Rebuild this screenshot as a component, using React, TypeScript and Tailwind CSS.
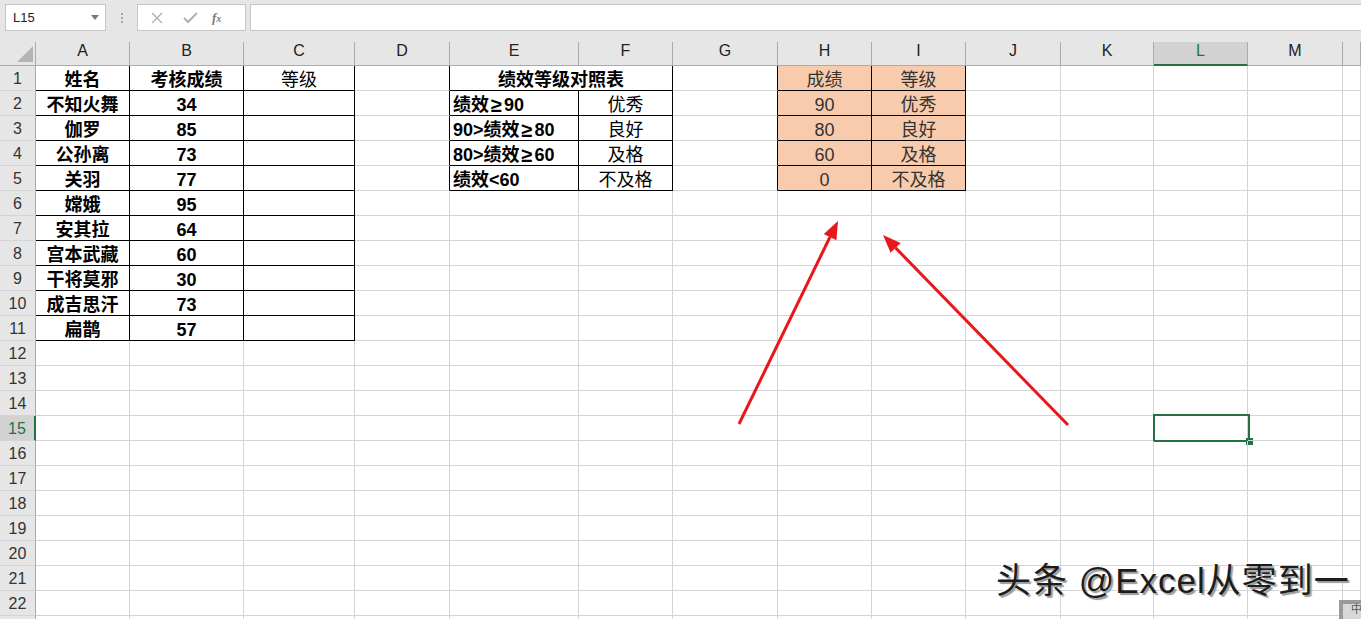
import React from "react";

type Cell = { t: string; b?: boolean; left?: boolean; fill?: boolean; span?: number };

const COL_LETTERS = ["A", "B", "C", "D", "E", "F", "G", "H", "I", "J", "K", "L", "M", ""];

const PEOPLE: [string, string][] = [
  ["不知火舞", "34"],
  ["伽罗", "85"],
  ["公孙离", "73"],
  ["关羽", "77"],
  ["嫦娥", "95"],
  ["安其拉", "64"],
  ["宫本武藏", "60"],
  ["干将莫邪", "30"],
  ["成吉思汗", "73"],
  ["扁鹊", "57"],
];

const RULES: [string, string][] = [
  ["绩效≥90", "优秀"],
  ["90>绩效≥80", "良好"],
  ["80>绩效≥60", "及格"],
  ["绩效<60", "不及格"],
];

const LOOKUP: [string, string][] = [
  ["90", "优秀"],
  ["80", "良好"],
  ["60", "及格"],
  ["0", "不及格"],
];

// bordered blocks: [rowFrom, rowTo, colFrom, colTo]
const RANGES = [
  [1, 11, 1, 3],
  [1, 5, 5, 6],
  [1, 5, 8, 9],
];

const inRange = (r: number, c: number) =>
  RANGES.some(([r1, r2, c1, c2]) => r >= r1 && r <= r2 && c >= c1 && c <= c2);

function buildCells() {
  const m: Record<string, Cell> = {};
  m["1,1"] = { t: "姓名", b: true };
  m["1,2"] = { t: "考核成绩", b: true };
  m["1,3"] = { t: "等级" };
  m["1,5"] = { t: "绩效等级对照表", b: true, span: 2 };
  m["1,8"] = { t: "成绩", fill: true };
  m["1,9"] = { t: "等级", fill: true };
  PEOPLE.forEach(([n, s], i) => {
    m[`${i + 2},1`] = { t: n, b: true };
    m[`${i + 2},2`] = { t: s, b: true };
  });
  RULES.forEach(([a, g], i) => {
    m[`${i + 2},5`] = { t: a, b: true, left: true };
    m[`${i + 2},6`] = { t: g };
  });
  LOOKUP.forEach(([s, g], i) => {
    m[`${i + 2},8`] = { t: s, fill: true };
    m[`${i + 2},9`] = { t: g, fill: true };
  });
  return m;
}

const CELLS = buildCells();

// the ≥ sign is a bit wider in the sheet, give it some room
function CellText({ t }: { t: string }) {
  if (!t.includes("≥")) return <>{t}</>;
  const parts = t.split("≥");
  return (
    <>
      {parts[0]}
      <span className="px-[2px] text-[20px]">≥</span>
      {parts[1]}
    </>
  );
}

function Toolbar() {
  return (
    <div className="h-[42px] bg-[#e6e6e6] flex items-start pt-[4px] pl-[5px]">
      <div className="w-[101px] h-[27px] bg-white border border-[#c6c6c6] flex items-center justify-between pl-[7px] pr-[6px]">
        <span className="text-[13px] text-[#222]">L15</span>
        <span className="w-0 h-0 border-l-[4px] border-r-[4px] border-t-[5px] border-l-transparent border-r-transparent border-t-[#7a7a7a]" />
      </div>
      <div className="w-[31px] h-[27px] flex flex-col items-center justify-center gap-[2px]">
        <span className="w-[2px] h-[2px] bg-[#a6a6a6]" />
        <span className="w-[2px] h-[2px] bg-[#a6a6a6]" />
        <span className="w-[2px] h-[2px] bg-[#a6a6a6]" />
      </div>
      <div className="w-[109px] h-[27px] bg-white border border-[#c6c6c6] flex items-center">
        <svg width="38" height="14" viewBox="0 0 38 14">
          <path d="M14 2 L24 12 M24 2 L14 12" stroke="#b0b0b0" strokeWidth="1.4" fill="none" />
        </svg>
        <svg width="30" height="14" viewBox="0 0 30 14">
          <path d="M8 7 L12 11 L21 2" stroke="#b0b0b0" strokeWidth="2" fill="none" />
        </svg>
        <span className="ml-[6px] text-[13px] italic font-bold text-[#7a7a7a] font-['Liberation_Serif',serif]">
          f<span className="text-[10px]">x</span>
        </span>
      </div>
      <div className="flex-1 h-[27px] ml-[4px] bg-white border border-[#c6c6c6] border-r-0" />
    </div>
  );
}

function ColumnHeader() {
  return (
    <>
      <div className="h-[24px] bg-[#e6e6e6] border-r border-b border-r-[#ababab] border-b-[#ababab] relative">
        <svg className="absolute left-[17px] top-[4px]" width="16" height="16" viewBox="0 0 16 16">
          <path d="M16 0 L16 16 L0 16 Z" fill="#b4b4b4" />
        </svg>
      </div>
      {COL_LETTERS.map((l, i) =>
        l === "L" ? (
          <div
            key={i}
            className="h-[24px] bg-[#d2d2d2] border-r border-r-[#ababab] border-b-2 border-b-[#217346] flex items-end justify-center pb-[1px] text-[16px] text-[#217346]"
          >
            {l}
          </div>
        ) : (
          <div
            key={i}
            className="h-[24px] bg-[#e6e6e6] border-r border-b border-r-[#ababab] border-b-[#ababab] flex items-end justify-center pb-[2px] text-[16px] text-[#222]"
          >
            {l}
          </div>
        )
      )}
    </>
  );
}

function SheetRow({ r }: { r: number }) {
  const out: React.ReactNode[] = [];
  const selRow = r === 15;
  out.push(
    <div
      key="h"
      className={
        selRow
          ? "h-[25px] bg-[#d2d2d2] border-r-2 border-r-[#217346] border-b border-b-[#d4d4d4] flex items-center justify-center pt-[2px] text-[16px] text-[#217346]"
          : "h-[25px] bg-[#e6e6e6] border-r border-r-[#ababab] border-b border-b-[#d4d4d4] flex items-center justify-center pt-[2px] text-[16px] text-[#333]"
      }
    >
      {r}
    </div>
  );
  for (let c = 1; c <= 14; c++) {
    const cell = CELLS[`${r},${c}`];
    const span = cell?.span ?? 1;
    const lastC = c + span - 1;
    const rightBlack = inRange(r, lastC) || inRange(r, lastC + 1);
    const bottomBlack = inRange(r, c) || inRange(r + 1, c);
    out.push(
      <div
        key={c}
        className={[
          "h-[25px] border-r border-b flex items-center pt-[4px] whitespace-nowrap relative text-[18px] leading-none",
          span === 2 ? "col-span-2" : "",
          rightBlack ? "border-r-black" : "border-r-[#d4d4d4]",
          bottomBlack ? "border-b-black" : "border-b-[#d4d4d4]",
          cell?.fill ? "bg-[#f8cbad] text-[#333]" : "text-black",
          cell?.left ? "justify-start pl-[3px]" : "justify-center",
          cell?.b ? "font-bold" : "",
        ].join(" ")}
      >
        {cell && <CellText t={cell.t} />}
        {r === 15 && c === 12 && (
          <div className="absolute -left-[1px] -top-[2px] -right-[3px] -bottom-[2px] border-2 border-[#217346]">
            <span className="absolute -right-[5px] -bottom-[5px] w-[7px] h-[7px] bg-[#217346]" />
          </div>
        )}
      </div>
    );
    c += span - 1;
  }
  return <>{out}</>;
}

function Arrows() {
  return (
    <svg className="absolute left-0 top-0 pointer-events-none" width="1361" height="619" viewBox="0 0 1361 619">
      <line x1="739" y1="424" x2="830" y2="237" stroke="#e8161d" strokeWidth="3" />
      <polygon points="838,221 836.4,240.3 823.8,234.1" fill="#e8161d" />
      <line x1="1068" y1="425" x2="895.6" y2="247.9" stroke="#e8161d" strokeWidth="3" />
      <polygon points="883,235 900.6,243 890.6,252.8" fill="#e8161d" />
    </svg>
  );
}

export default function App() {
  const rows = Array.from({ length: 23 }, (_, i) => i + 1);
  return (
    <div className="relative w-[1361px] h-[619px] overflow-hidden bg-white font-['Liberation_Sans','Noto_Sans_CJK_SC',sans-serif]">
      <Toolbar />
      <div className="grid grid-cols-[36px_94px_114px_111px_95px_129px_94px_105px_94px_94px_95px_93px_94px_95px_1fr]">
        <ColumnHeader />
        {rows.map((r) => (
          <SheetRow key={r} r={r} />
        ))}
      </div>
      <Arrows />
      {/* watermark */}
      <div className="absolute left-[996px] top-[563px] text-[35px] leading-none tracking-[1px] text-[#1c1c1c] [text-shadow:2px_2px_1px_#9a9a9a,-1px_-1px_0_#ffffff] whitespace-nowrap">
        头条 @Excel从零到一
      </div>
      <div className="absolute left-[1339px] top-[600px] w-[24px] h-[20px] bg-[#d8d8d8] border-l-4 border-t-4 border-[#9a9a9a] flex items-start justify-end pr-[1px] text-[11px] text-[#555] leading-none">
        中
      </div>
    </div>
  );
}
